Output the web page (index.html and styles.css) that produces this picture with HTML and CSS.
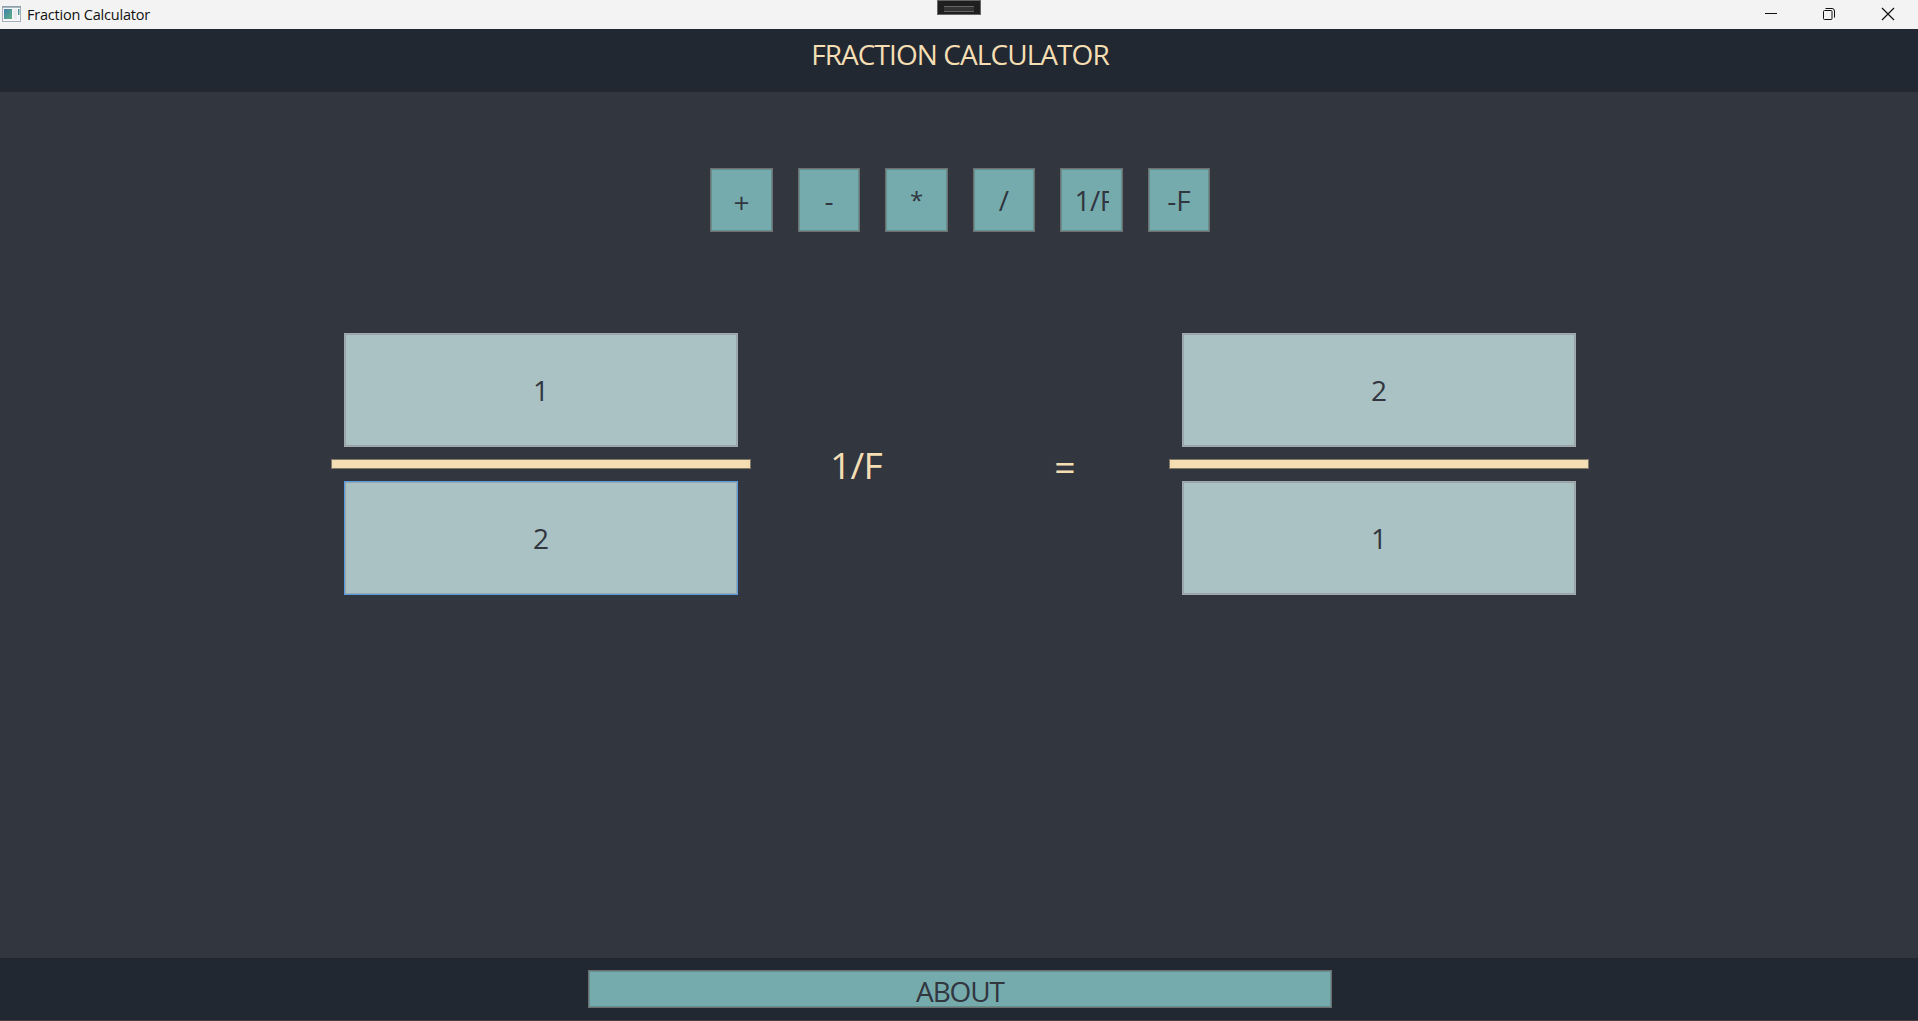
FILE: index.html
```html
<!DOCTYPE html>
<html lang="en">
<head>
<meta charset="utf-8">
<title>Fraction Calculator</title>
<link rel="stylesheet" href="styles.css">
</head>
<body>
<div class="window">
  <div class="titlebar">
    <svg class="app-icon" width="20" height="17" viewBox="0 0 20 17">
      <defs><linearGradient id="pane" x1="0" y1="0" x2="1" y2="1"><stop offset="0" stop-color="#3f7fae"/><stop offset="1" stop-color="#5fb184"/></linearGradient></defs>
      <rect x="0.5" y="1" width="18" height="14.500" fill="#f4f6f8" stroke="#a5afba"/>
      <path d="M0 .8h19" stroke="#7c929c" stroke-width="1.200"/>
      <rect x="2" y="3" width="8" height="10" fill="url(#pane)"/>
      <rect x="11.500" y="3" width="3.500" height="10" fill="#e9ecee"/>
      <rect x="16" y="3" width="1.500" height="6" fill="url(#pane)"/>
    </svg>
    <span class="window-title">Fraction Calculator</span>
    <svg class="controls" width="132" height="16" viewBox="0 0 132 16" fill="none" stroke="#111">
      <path d="M0 7.500h12"/>
      <rect x="58.500" y="4.500" width="8.500" height="9" rx="1"/>
      <path d="M60.500 2.500h6.500q2.500 0 2.500 2.500v6.500"/>
      <path d="M117 2l12 12M129 2l-12 12" stroke-width="1.200"/>
    </svg>
    <div class="debug-handle"></div>
  </div>
  <header class="header"><h1 class="heading">FRACTION CALCULATOR</h1></header>
  <main class="main">
    <div class="operators">
      <button class="btn op"><span class="op-label plus">+</span></button>
      <button class="btn op narrow"><span class="op-label">-</span></button>
      <button class="btn op"><span class="op-label star">*</span></button>
      <button class="btn op narrow"><span class="op-label">/</span></button>
      <button class="btn op"><span class="op-label clipped">1/F</span></button>
      <button class="btn op narrow"><span class="op-label">-F</span></button>
    </div>
    <div class="equation">
      <div class="fraction">
        <div class="field">1</div>
        <div class="bar"></div>
        <div class="field focused">2</div>
      </div>
      <div class="operation">1/F</div>
      <div class="equals">=</div>
      <div class="fraction">
        <div class="field">2</div>
        <div class="bar"></div>
        <div class="field">1</div>
      </div>
    </div>
  </main>
  <footer class="footer"><button class="btn about"><span class="about-label">ABOUT</span></button></footer>
</div>
</body>
</html>
```
FILE: styles.css
```css
* { box-sizing: border-box; }
body { margin: 0; font-family: "Open Sans", "Noto Sans", sans-serif; overflow: hidden; }
.window { width: 1918px; height: 1021px; display: flex; flex-direction: column; background: #31363f; border-bottom: 1px solid #493f43; }
.titlebar { position: relative; flex: none; height: 29px; background: #f3f3f3; display: flex; align-items: center; padding: 0 21px 0 2px; }
.app-icon { margin-top: -1px; }
.window-title { margin-left: 5px; font-size: 14.5px; line-height: 29px; letter-spacing: -0.2px; color: #111; }
.controls { margin-left: auto; margin-top: -2px; }
.debug-handle { position: absolute; left: 937px; top: 0; width: 44px; height: 15px; background: #1f1f1f; border: 1px solid #656565; }
.debug-handle::after { content: ""; display: block; width: 30px; height: 4px; margin: 5px 6px; background: #333; border: solid #656565; border-width: 1px 0; }
.header { flex: none; height: 63px; background: #222831; display: flex; justify-content: center; padding: 6px 0 0 2px; }
.heading { margin: 0; font-size: 28px; font-weight: 400; line-height: 38px; letter-spacing: -0.93px; color: #f5deb3; }
.main { flex: 1; display: flex; flex-direction: column; align-items: center; padding: 76px 0 0 2px; }
.operators { display: flex; gap: 25px; }
.btn { display: flex; align-items: center; justify-content: center; padding: 0; border: 1px solid #707070; background: #76abae; box-shadow: inset 0 0 0 1px #648f91; font: 400 28px/38px "Open Sans", "Noto Sans", sans-serif; color: #31363f; }
.op { width: 63px; height: 64px; }
.op.narrow { width: 62px; }
.op-label { white-space: nowrap; }
.plus { padding-top: 3px; }
.star { font-size: 24px; }
.clipped { width: 34px; overflow: hidden; letter-spacing: -0.5px; text-align: left; }
.equation { display: grid; grid-template-columns: 420px 210px 208px 420px; align-items: center; margin-top: 101px; }
.fraction { display: flex; flex-direction: column; align-items: center; gap: 12px; }
.field { width: 394px; height: 114px; border: 1px solid #a1a8ae; background: #abc2c5; box-shadow: inset 0 0 0 1px #98a5aa; color: #31363f; font-size: 28px; line-height: 112px; text-align: center; }
.focused { border-color: #569de5; }
.bar { width: 420px; height: 10px; background: #f5deb3; border: 1px solid #817867; }
.operation, .equals { color: #f5deb3; font-size: 37.333px; line-height: 50px; text-align: center; padding-top: 2px; }
.operation { letter-spacing: -0.7px; }
.equals { padding-top: 6px; }
.footer { flex: none; height: 62px; background: #222831; display: flex; justify-content: center; padding: 12px 0 0 2px; }
.about { width: 744px; height: 38px; }
.about-label { letter-spacing: -1.1px; padding-top: 4px; }
```
